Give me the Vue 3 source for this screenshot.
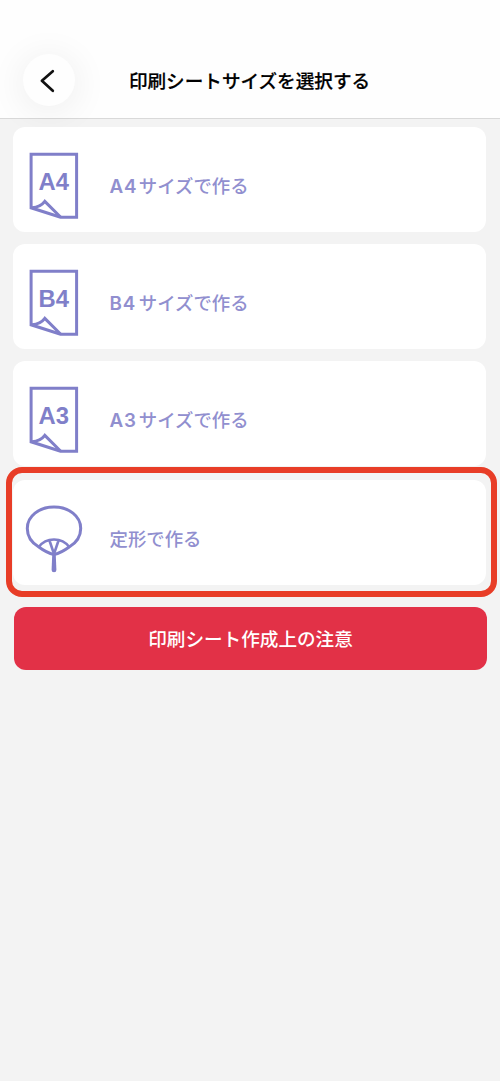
<script setup>
const sheets = [
  { code: 'A4', label: 'サイズで作る' },
  { code: 'B4', label: 'サイズで作る' },
  { code: 'A3', label: 'サイズで作る' },
]
</script>

<template>
  <div class="screen">
    <header class="header">
      <button class="back" aria-label="戻る">
        <svg width="52" height="52" viewBox="0 0 52 52">
          <path d="M29.8 17.2 L18.9 26.8 L29.8 36.8" />
        </svg>
      </button>
      <h1 class="title">印刷シートサイズを選択する</h1>
    </header>

    <main class="list">
      <button v-for="s in sheets" :key="s.code" class="card">
        <svg class="icon" width="60" height="72" viewBox="0 0 60 72">
          <path d="M7.100 58.800 V5.300 H52.600 V68.300 H36.500 Z" />
          <path d="M8 58.800 Q16.500 58.200 20.800 52.400 L36.500 68" />
          <text x="29.8" y="41.2" text-anchor="middle">{{ s.code }}</text>
        </svg>
        <span class="label"><span class="code">{{ s.code }}</span>{{ s.label }}</span>
      </button>

      <div class="featured">
        <button class="card">
          <svg class="icon" width="60" height="72" viewBox="0 0 60 72">
            <path d="M30 52.600 Q37 51 45.200 45 C52.300 40.700 56.700 34 56.700 26.400 C56.700 14.200 45 5.100 30 5.100 C15 5.100 3.300 14.200 3.300 26.400 C3.300 34 7.700 40.700 14.800 45 Q23 51 30 52.600 Z" />
            <path class="ribs" d="M14.800 45 C22 35 38 35 45.200 45 M25.300 38 L30 52 L34.700 38" />
            <path class="handle" d="M28.300 51 H31.700 L32.400 68 Q32.400 70.200 30 70.200 Q27.600 70.200 27.600 68 Z" />
          </svg>
          <span class="label">定形で作る</span>
        </button>
      </div>

      <button class="notice"><span>印刷シート作成上の注意</span></button>
    </main>
  </div>
</template>

<style>
body {
  margin: 0;
  background: #f3f3f3;
}
</style>

<style scoped>
.screen {
  min-height: 1081px;
  background: #f3f3f3;
  font-family: "Noto Sans CJK JP", sans-serif;
}

button {
  border: 0;
  padding: 0;
  font: inherit;
}

.header {
  box-sizing: border-box;
  height: 119px;
  padding: 54px 24px 0 23px;
  display: grid;
  grid-template-columns: 52px 1fr 52px;
  background: #fefefe;
  border-bottom: 1px solid #d9d9d9;
}

.back {
  width: 52px;
  height: 52px;
  border-radius: 50%;
  background: #fefefe;
  box-shadow: 0 4px 34px 4px rgba(0, 0, 0, 0.06);
}

.back svg {
  display: block;
  fill: none;
  stroke: #111;
  stroke-width: 2.7;
  stroke-linecap: round;
  stroke-linejoin: round;
}

.title {
  margin: 0;
  font-size: 18.6px;
  font-weight: 500;
  line-height: 51px;
  text-align: center;
  white-space: nowrap;
  color: #000;
  -webkit-text-stroke: 0.2px #000;
}

.list {
  padding: 8px 14.5px 0 12.5px;
  display: flex;
  flex-direction: column;
  gap: 12px;
}

.card {
  box-sizing: border-box;
  width: 100%;
  height: 105px;
  padding-left: 11.5px;
  border-radius: 12px;
  background: #fff;
  display: flex;
  align-items: center;
  text-align: left;
}

.icon {
  flex: none;
  margin-top: 11px;
  fill: none;
  stroke: #807fc9;
  stroke-width: 3;
}

.icon text {
  fill: #807fc9;
  stroke: none;
  font-family: "Liberation Sans", Arial, sans-serif;
  font-size: 23.8px;
  font-weight: 700;
}

.icon .ribs {
  stroke-width: 2.6;
}

.icon .handle {
  fill: #807fc9;
  stroke: none;
}

.label {
  margin: 10px 0 0 25.5px;
  font-size: 18.4px;
  font-weight: 500;
  color: #918fcf;
  white-space: nowrap;
}

.code {
  display: inline-block;
  width: 29.3px;
  font-family: Inter, "Liberation Sans", sans-serif;
  font-weight: 600;
  font-size: 18.8px;
  letter-spacing: 0.8px;
}

.featured {
  margin: -11px -11px 0 -6.5px;
  padding: 7px 5px 6px 0.5px;
  border: 6px solid #e83d27;
  border-radius: 16px;
}

.notice {
  margin: -2px -1.5px 0 1.5px;
  padding: 0 0 2px;
  height: 63px;
  border-radius: 12px;
  background: #e23147;
  color: #fff;
  font-size: 18.6px;
  font-weight: 500;
}
</style>
